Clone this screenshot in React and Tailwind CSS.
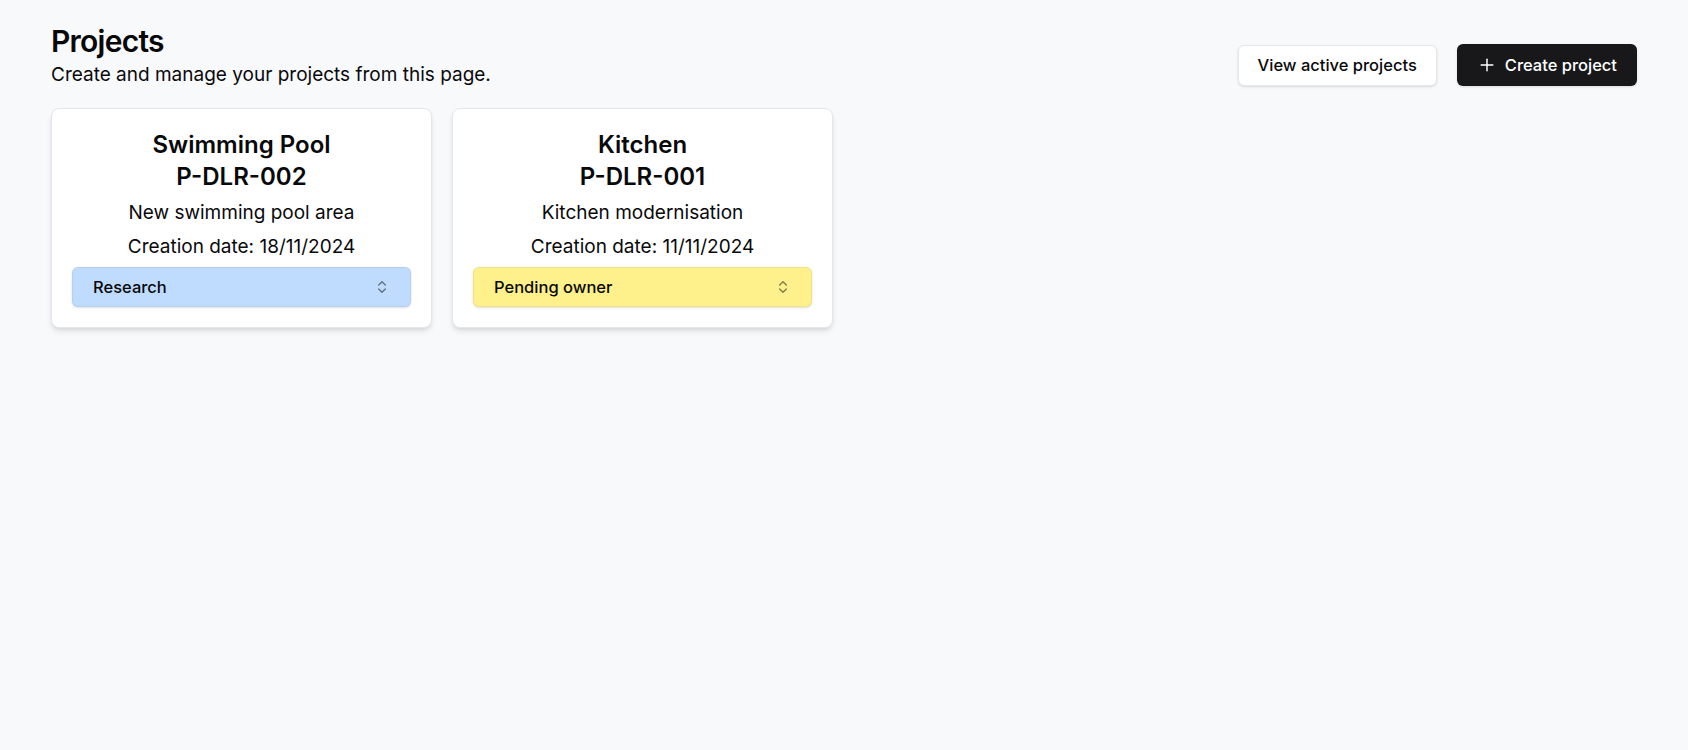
import { Plus, ChevronsUpDown } from "lucide-react";

const projects = [
  {
    name: "Swimming Pool",
    code: "P-DLR-002",
    description: "New swimming pool area",
    created: "18/11/2024",
    status: "Research",
    statusBg: "bg-[#bfdbfe]",
  },
  {
    name: "Kitchen",
    code: "P-DLR-001",
    description: "Kitchen modernisation",
    created: "11/11/2024",
    status: "Pending owner",
    statusBg: "bg-[#fef08a]",
  },
];

function ProjectCard({ project }) {
  return (
    <div className="w-[381px] rounded-lg border border-gray-200 bg-white p-5 shadow-md">
      <div className="flex flex-col gap-1.5 text-center text-[#09090b]">
        <h2 className="text-2xl font-semibold">
          {project.name}
          <br />
          {project.code}
        </h2>
        <p className="text-[19px] leading-7">{project.description}</p>
        <p className="text-[19px] leading-7">Creation date: {project.created}</p>
        <button
          className={`flex h-10 w-full items-center justify-between rounded-md border border-black/5 px-5 text-[16.5px] font-medium shadow-sm ${project.statusBg}`}
        >
          <span>{project.status}</span>
          <ChevronsUpDown className="h-4 w-4 opacity-50" strokeWidth={2} />
        </button>
      </div>
    </div>
  );
}

export default function App() {
  return (
    <div className="min-h-screen bg-[#f8f9fb] px-[51px] pt-[23px] font-['Inter',sans-serif] text-[#09090b]">
      {/* header */}
      <div className="flex items-end justify-between">
        <div>
          <h1 className="text-3xl font-semibold tracking-tight">Projects</h1>
          <p className="mt-[2px] text-[19px] leading-7">Create and manage your projects from this page.</p>
        </div>
        <div className="mb-[3px] flex items-center gap-5">
          <button className="h-[41px] rounded-md border border-gray-200 bg-white px-[19px] text-[16.5px] font-medium shadow-sm">
            View active projects
          </button>
          <button className="flex h-[42px] items-center gap-2 rounded-md bg-[#18181b] px-5 text-[16.5px] font-medium text-white shadow-sm">
            <Plus className="h-5 w-5" strokeWidth={1.75} />
            Create project
          </button>
        </div>
      </div>

      {/* cards */}
      <div className="mt-[19px] flex gap-5">
        {projects.map((p) => (
          <ProjectCard key={p.code} project={p} />
        ))}
      </div>
    </div>
  );
}
